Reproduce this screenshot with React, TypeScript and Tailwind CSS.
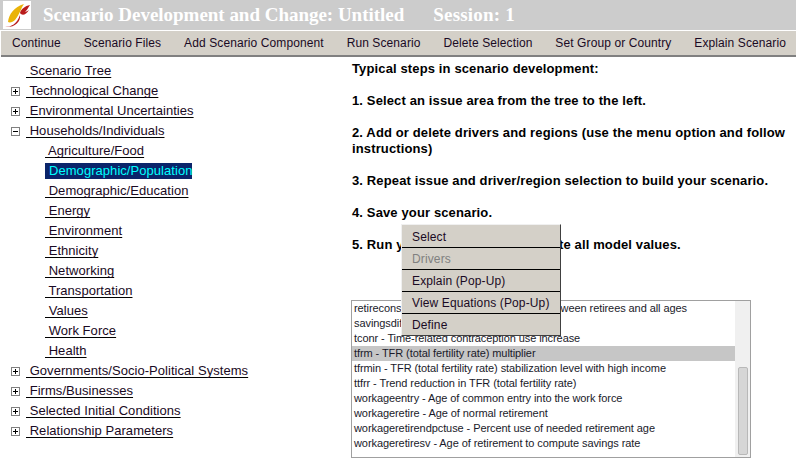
import React from 'react';

const menuItems = [
    'Continue',
    'Scenario Files',
    'Add Scenario Component',
    'Run Scenario',
    'Delete Selection',
    'Set Group or Country',
    'Explain Scenario',
];

const subItems = [
    'Agriculture/Food',
    'Demographic/Population',
    'Demographic/Education',
    'Energy',
    'Environment',
    'Ethnicity',
    'Networking',
    'Transportation',
    'Values',
    'Work Force',
    'Health',
];

const listRows = [
    'retireconsrat - The ratio of consumption between retirees and all ages',
    'savingsdiff - Savings rate differential',
    'tconr - Time-related contraception use increase',
    'tfrm - TFR (total fertility rate) multiplier',
    'tfrmin - TFR (total fertility rate) stabilization level with high income',
    'ttfrr - Trend reduction in TFR (total fertility rate)',
    'workageentry - Age of common entry into the work force',
    'workageretire - Age of normal retirement',
    'workageretirendpctuse - Percent use of needed retirement age',
    'workageretiresv - Age of retirement to compute savings rate',
];

const TreeBox = ({ open }: { open?: boolean }) => (
    <span className="relative w-[9px] h-[9px] border border-[#808080] bg-white shrink-0">
        <span className="absolute left-[1px] top-[3px] w-[5px] h-[1px] bg-black" />
        {!open && <span className="absolute left-[3px] top-[1px] w-[1px] h-[5px] bg-black" />}
    </span>
);

const TreeRow = ({ label, open, box = true }: { label: string; open?: boolean; box?: boolean }) => (
    <div className="h-5 flex items-center">
        <div className="w-[26px] pl-[11px] flex items-center shrink-0">{box && <TreeBox open={open} />}</div>
        <span className="underline decoration-black underline-offset-2 whitespace-pre">{' ' + label}</span>
    </div>
);

const App = () => {
    return (
        <div className="w-[796px] h-[466px] relative overflow-hidden bg-white text-black font-['Liberation_Sans',Arial,sans-serif]">
            {/* Title bar */}
            <div className="h-[30px] bg-[#cccccc] flex items-center pl-[3px]">
                <div className="w-[28px] h-[28px] bg-white shrink-0">
                    <svg viewBox="0 0 28 28" width="28" height="28">
                        <path d="M5 21 C6 13 11 6 21 3 C18 7 17 13 12 19 C10 21 7 22 5 21 Z" fill="#eab308" />
                        <path d="M17 12 C18 8 22 5 27 4 C25 7 24 9 22 11 C24 10 25 10 26 9 C23 14 19 15 17 12 Z" fill="#b91c1c" />
                        <path d="M2 26 C8 26 14 23 17 14 C18 21 11 27 2 26 Z" fill="#b91c1c" />
                    </svg>
                </div>
                <span className="ml-3 text-white font-bold text-[19px] tracking-[-0.02px] font-['Liberation_Serif',serif] whitespace-pre">Scenario Development and Change: Untitled</span>
                <span className="ml-[29px] text-white font-bold text-[19px] tracking-[0.2px] font-['Liberation_Serif',serif] whitespace-pre">Session: 1</span>
            </div>

            {/* Menu bar */}
            <div className="mt-[1px] ml-[1px] h-[26px] bg-[#d4d0c8] border-b-2 border-[#808080] flex items-center justify-between pl-[11px] pr-[10px] text-[12px] tracking-[0.1px] text-[#1a0a24]">
                {menuItems.map((item) => (
                    <span key={item} className="whitespace-nowrap">{item}</span>
                ))}
            </div>

            <div className="flex">
                {/* Scenario tree */}
                <div className="w-[351px] pt-[4px] text-[13px] tracking-[0.05px] text-[#1a0a24]">
                    <TreeRow label="Scenario Tree" box={false} />
                    <TreeRow label="Technological Change" />
                    <TreeRow label="Environmental Uncertainties" />
                    <TreeRow label="Households/Individuals" open />
                    {subItems.map((item) => (
                        <div key={item} className="h-5 flex items-center pl-[45px]">
                            {item === 'Demographic/Population' ? (
                                <span className="bg-[#0a246a] text-[#00ffff] pl-[4px] h-4 leading-4">{item}</span>
                            ) : (
                                <span className="underline decoration-black underline-offset-2 whitespace-pre">{' ' + item}</span>
                            )}
                        </div>
                    ))}
                    <TreeRow label="Governments/Socio-Political Systems" />
                    <TreeRow label="Firms/Businesses" />
                    <TreeRow label="Selected Initial Conditions" />
                    <TreeRow label="Relationship Parameters" />
                </div>

                {/* Instructions and driver list */}
                <div className="w-[445px]">
                    <div className="h-[243px] pt-[4px] pl-[1px] font-bold text-[13px] tracking-[0.13px] leading-4 text-black">
                        <p className="mb-4">Typical steps in scenario development:</p>
                        <p className="mb-4">1. Select an issue area from the tree to the left.</p>
                        <p className="mb-4">2. Add or delete drivers and regions (use the menu option and follow instructions)</p>
                        <p className="mb-4">3. Repeat issue and driver/region selection to build your scenario.</p>
                        <p className="mb-4">4. Save your scenario.</p>
                        <p>5. Run your scenario to recompute all model values.</p>
                    </div>
                    <div className="w-[400px] h-[158px] border border-[#a0a0a0] flex text-[11px] tracking-[-0.08px] text-[#1a1a2a]">
                        <div className="flex-1 min-w-0">
                            {listRows.map((row) => (
                                <div
                                    key={row}
                                    className={`h-[15px] leading-[15px] pl-[2px] whitespace-nowrap ${row.startsWith('tfrm -') ? 'bg-[#c6c6c6]' : ''}`}
                                >
                                    {row}
                                </div>
                            ))}
                        </div>
                        <div className="w-[15px] bg-[#f0f0f0] flex flex-col justify-end items-center pb-[2px]">
                            <div className="w-[10px] h-[88px] bg-[#d6d6d6] border border-[#b8b8b8] rounded-[2px]" />
                        </div>
                    </div>
                </div>
            </div>

            {/* Context menu */}
            <div className="absolute left-[401px] top-[224px] w-[160px] h-[112px] bg-[#d4d0c8] border border-t-[#f0f0f0] border-l-[#f0f0f0] border-r-[#404040] border-b-[#404040] text-[12px] tracking-[0.13px] text-[#1a0a24]">
                <div className="h-[23px] leading-[24px] pl-[10px] border-b border-black">Select</div>
                <div className="h-[22px] leading-[22px] pl-[10px] border-b border-black text-[#808080]">Drivers</div>
                <div className="h-[22px] leading-[22px] pl-[10px] border-b border-black">Explain (Pop-Up)</div>
                <div className="h-[22px] leading-[22px] pl-[10px] border-b border-black">View Equations (Pop-Up)</div>
                <div className="h-[21px] leading-[23px] pl-[10px]">Define</div>
            </div>
        </div>
    );
};

export default App;
